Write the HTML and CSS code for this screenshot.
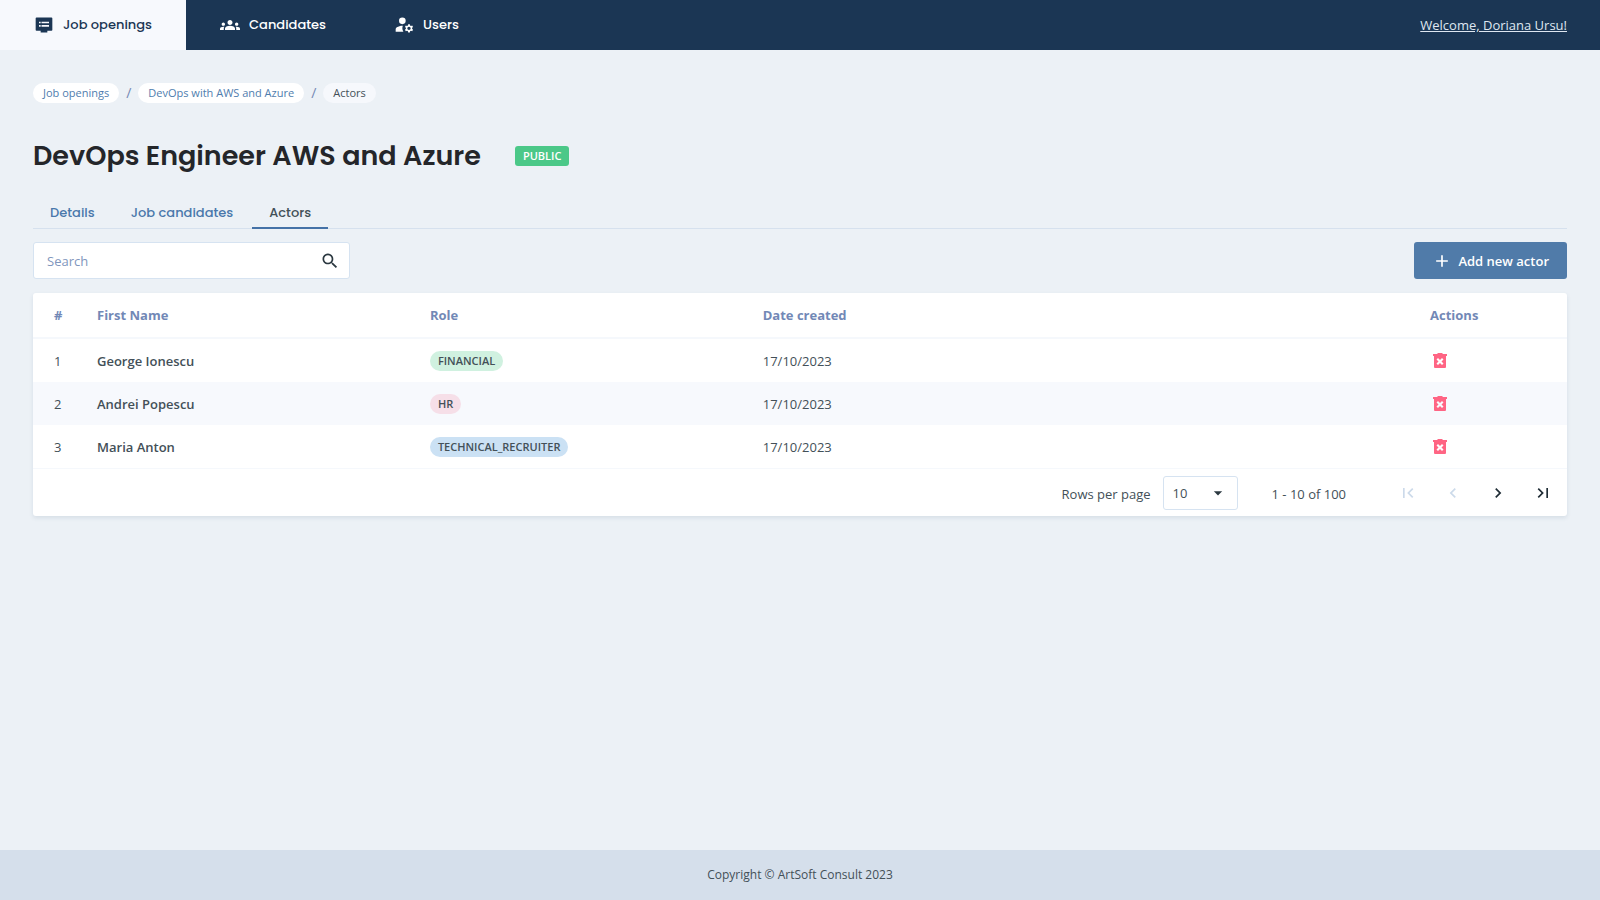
FILE: index.html
```html
<!DOCTYPE html>
<html lang="en">
  <head>
    <meta charset="UTF-8" />
    <meta name="viewport" content="width=device-width, initial-scale=1" />
    <title>Actors - DevOps Engineer AWS and Azure</title>
    <link rel="stylesheet" href="styles.css">
  </head>
  <body>
    <header class="topbar">
      <nav class="main-nav">
        <a class="active" href="#">
          <svg viewBox="0 0 24 24"><path d="M21 3H3c-.6 0-1 .4-1 1v14c0 .6.4 1 1 1h5v2h8v-2h5c.6 0 1-.4 1-1V4c0-.6-.4-1-1-1zM8 14H6v-2h2v2zm0-4H6V8h2v2zm10 4H9v-2h9v2zm0-4H9V8h9v2z" /></svg>
          Job openings
        </a>
        <a href="#">
          <svg viewBox="0 0 24 24"><path d="M12 12.750c1.630 0 3.070.39 4.240.9 1.080.48 1.760 1.560 1.760 2.730V18H6v-1.610c0-1.180.68-2.260 1.760-2.730 1.170-.52 2.610-.91 4.240-.91zM4 13c1.100 0 2-.9 2-2s-.9-2-2-2-2 .9-2 2 .9 2 2 2zm1.130 1.100C4.760 14.040 4.390 14 4 14c-.99 0-1.930.21-2.780.58C.48 14.900 0 15.620 0 16.430V18h4.500v-1.610c0-.83.23-1.610.63-2.290zM20 13c1.100 0 2-.9 2-2s-.9-2-2-2-2 .9-2 2 .9 2 2 2zm4 3.430c0-.81-.48-1.530-1.220-1.850C21.930 14.210 20.990 14 20 14c-.39 0-.76.04-1.130.1.400.68.630 1.460.630 2.290V18H24v-1.570zM12 6c1.660 0 3 1.340 3 3s-1.340 3-3 3-3-1.340-3-3 1.340-3 3-3z" /></svg>
          Candidates
        </a>
        <a href="#">
          <svg viewBox="0 0 24 24"><circle cx="10" cy="7" r="4" /><path d="M10.670 13.020C10.450 13.010 10.230 13 10 13c-2.420 0-4.680.67-6.610 1.820C2.510 15.340 2 16.320 2 17.350V20h9.260C10.470 18.870 10 17.490 10 16c0-1.070.25-2.070.67-2.980z" /><path d="M21.750 16c0-.22-.03-.42-.06-.63l1.140-1.010-1-1.730-1.450.49c-.32-.27-.68-.48-1.080-.63L19 11h-2l-.3 1.490c-.4.150-.76.360-1.080.63l-1.450-.49-1 1.730 1.140 1.010c-.03.21-.06.41-.06.63s.03.42.06.63l-1.140 1.010 1 1.730 1.450-.49c.32.270.68.480 1.080.63L17 21h2l.3-1.490c.4-.15.76-.36 1.080-.63l1.450.49 1-1.730-1.140-1.010c.03-.21.06-.41.06-.63zM18 18c-1.100 0-2-.9-2-2s.9-2 2-2 2 .9 2 2-.9 2-2 2z" /></svg>
          Users
        </a>
      </nav>
      <a class="welcome" href="#">Welcome, Doriana Ursu!</a>
    </header>

    <main>
      <nav class="breadcrumb" aria-label="Breadcrumb">
        <a href="#">Job openings</a>
        <span class="separator">/</span>
        <a href="#">DevOps with AWS and Azure</a>
        <span class="separator">/</span>
        <span class="current">Actors</span>
      </nav>

      <div class="title">
        <h1>DevOps Engineer AWS and Azure</h1>
        <span class="status">PUBLIC</span>
      </div>

      <nav class="tabs">
        <a href="#">Details</a>
        <a href="#">Job candidates</a>
        <a class="active" href="#">Actors</a>
      </nav>

      <div class="toolbar">
        <form class="search">
          <input type="text" placeholder="Search" aria-label="Search" />
          <button type="submit" aria-label="Submit search">
            <svg viewBox="0 0 24 24"><path d="M15.500 14h-.79l-.28-.27C15.410 12.590 16 11.110 16 9.500 16 5.910 13.090 3 9.500 3S3 5.910 3 9.500 5.910 16 9.500 16c1.610 0 3.090-.59 4.230-1.570l.27.28v.79l5 4.990L20.490 19l-4.990-5zm-6 0C7.010 14 5 11.990 5 9.500S7.010 5 9.500 5 14 7.010 14 9.500 11.990 14 9.500 14z" /></svg>
          </button>
        </form>
        <button type="button" class="btn-add">
          <svg viewBox="0 0 24 24"><path d="M19 13h-6v6h-2v-6H5v-2h6V5h2v6h6v2z" /></svg>
          Add new actor
        </button>
      </div>

      <div class="card">
        <table>
          <colgroup>
            <col class="col-index" />
            <col class="col-name" />
            <col class="col-role" />
            <col class="col-date" />
            <col />
          </colgroup>
          <thead>
            <tr>
              <th>#</th>
              <th>First Name</th>
              <th>Role</th>
              <th>Date created</th>
              <th>Actions</th>
            </tr>
          </thead>
          <tbody>
            <tr>
              <td>1</td>
              <td class="name">George Ionescu</td>
              <td><span class="role financial">FINANCIAL</span></td>
              <td>17/10/2023</td>
              <td>
                <button type="button" class="btn-delete" aria-label="Delete George Ionescu">
                  <svg viewBox="0 0 20 20"><path fill-rule="evenodd" d="M3 3h4l1-1h4l1 1h4v2h-1v11q0 1-1 1H5q-1 0-1-1V5H3zM8 7L6.500 8.500 8.500 10.500l-2 2L8 14l2-2 2 2 1.500-1.500-2-2 2-2L12 7l-2 2z" /></svg>
                </button>
              </td>
            </tr>
            <tr>
              <td>2</td>
              <td class="name">Andrei Popescu</td>
              <td><span class="role hr">HR</span></td>
              <td>17/10/2023</td>
              <td>
                <button type="button" class="btn-delete" aria-label="Delete Andrei Popescu">
                  <svg viewBox="0 0 20 20"><path fill-rule="evenodd" d="M3 3h4l1-1h4l1 1h4v2h-1v11q0 1-1 1H5q-1 0-1-1V5H3zM8 7L6.500 8.500 8.500 10.500l-2 2L8 14l2-2 2 2 1.500-1.500-2-2 2-2L12 7l-2 2z" /></svg>
                </button>
              </td>
            </tr>
            <tr>
              <td>3</td>
              <td class="name">Maria Anton</td>
              <td><span class="role recruiter">TECHNICAL_RECRUITER</span></td>
              <td>17/10/2023</td>
              <td>
                <button type="button" class="btn-delete" aria-label="Delete Maria Anton">
                  <svg viewBox="0 0 20 20"><path fill-rule="evenodd" d="M3 3h4l1-1h4l1 1h4v2h-1v11q0 1-1 1H5q-1 0-1-1V5H3zM8 7L6.500 8.500 8.500 10.500l-2 2L8 14l2-2 2 2 1.500-1.500-2-2 2-2L12 7l-2 2z" /></svg>
                </button>
              </td>
            </tr>
          </tbody>
        </table>

        <!-- Pagination -->
        <div class="pagination">
          <label for="rows">Rows per page</label>
          <div class="select">
            <select id="rows">
              <option>10</option>
              <option>25</option>
              <option>50</option>
            </select>
            <svg viewBox="0 0 24 24"><path d="M7 10l5 5 5-5z" /></svg>
          </div>
          <span class="range">1 - 10 of 100</span>
          <div class="pager">
            <button type="button" aria-label="First page" disabled>
              <svg viewBox="0 0 24 24"><path d="M18.410 16.590L13.820 12l4.590-4.590L17 6l-6 6 6 6zM6 6h2v12H6z" /></svg>
            </button>
            <button type="button" aria-label="Previous page" disabled>
              <svg viewBox="0 0 24 24"><path d="M15.410 7.410L14 6l-6 6 6 6 1.410-1.410L10.830 12z" /></svg>
            </button>
            <button type="button" aria-label="Next page">
              <svg viewBox="0 0 24 24"><path d="M10 6L8.590 7.410 13.170 12l-4.580 4.590L10 18l6-6z" /></svg>
            </button>
            <button type="button" aria-label="Last page">
              <svg viewBox="0 0 24 24"><path d="M5.590 7.410L10.180 12l-4.590 4.590L7 18l6-6-6-6zM16 6h2v12h-2z" /></svg>
            </button>
          </div>
        </div>
      </div>
    </main>

    <footer>Copyright © ArtSoft Consult 2023</footer>
  </body>
</html>
```
FILE: styles.css
```css
* {
  box-sizing: border-box;
}

body {
  display: flex;
  flex-direction: column;
  min-height: 100vh;
  margin: 0;
  font-family: "Open Sans", sans-serif;
  font-size: 13px;
  line-height: 20px;
  color: #435058;
  background-color: #ecf1f6;
}

a {
  text-decoration: none;
}

button,
input,
select {
  font: inherit;
}

button {
  border: none;
  padding: 0;
  background: none;
  cursor: pointer;
}

svg {
  display: block;
  width: 20px;
  height: 20px;
  fill: currentColor;
}

/* Header */
.topbar {
  display: flex;
  justify-content: space-between;
  align-items: center;
  height: 50px;
  padding-right: 33px;
  background-color: #1b3654;
}

.main-nav {
  display: flex;
  height: 100%;
}

.main-nav a {
  display: flex;
  align-items: center;
  gap: 9px;
  padding: 0 34px;
  font-family: Poppins, Inter, sans-serif;
  font-weight: 500;
  color: #fff;
}

.main-nav a.active {
  color: #1b3654;
  background-color: #f7f9fd;
}

.welcome {
  color: #dfe7f1;
  text-decoration: underline;
}

main {
  flex: 1;
  padding: 33px 33px 40px;
}

/* Breadcrumb */
.breadcrumb {
  display: flex;
  align-items: center;
  gap: 7px;
  font-size: 11px;
}

.breadcrumb a,
.breadcrumb .current {
  padding: 0 10px;
  border-radius: 10px;
}

.breadcrumb a {
  color: #4f7dae;
  background-color: #fff;
}

.breadcrumb .current {
  background-color: #f6f8fc;
}

.separator {
  font-size: 14px;
  color: #7489b5;
}

/* Title */
.title {
  display: flex;
  align-items: center;
  gap: 34px;
  margin-top: 33px;
}

h1 {
  margin: 0;
  font-family: Poppins, Inter, sans-serif;
  font-size: 27px;
  font-weight: 600;
  line-height: 40px;
  color: #24262a;
}

.status {
  padding: 0 8px;
  border-radius: 3px;
  font-size: 11px;
  font-weight: 600;
  color: #fff;
  background-color: #4bc888;
}

/* Tabs */
.tabs {
  display: flex;
  gap: 2px;
  margin-top: 21px;
  border-bottom: 1px solid #d6e1ee;
}

.tabs a {
  margin-bottom: -1px;
  padding: 6px 17px 4px;
  border-bottom: 2px solid transparent;
  font-family: Poppins, Inter, sans-serif;
  font-weight: 500;
  color: #4a78ab;
}

.tabs a.active {
  border-bottom-color: #4572a7;
  color: #435058;
}

/* Toolbar */
.toolbar {
  display: flex;
  justify-content: space-between;
  margin: 13px 0 14px;
}

.search {
  display: flex;
  align-items: center;
  width: 317px;
  height: 37px;
  padding: 0 9px 0 13px;
  border: 1px solid #d6e3f1;
  border-radius: 3px;
  background-color: #fff;
}

.search input {
  flex: 1;
  min-width: 0;
  padding: 0;
  border: none;
  outline: none;
  color: #435058;
  background: none;
}

.search input::placeholder {
  color: #8196bd;
}

.search button {
  color: #2b3840;
}

.btn-add {
  display: flex;
  align-items: center;
  gap: 6px;
  height: 37px;
  padding: 0 18px;
  border-radius: 3px;
  font-weight: 600;
  color: #fff;
  background-color: #507ba9;
}

/* Table */
.card {
  border-radius: 3px;
  background-color: #fff;
  box-shadow: 0 2px 4px rgba(60, 90, 120, 0.12);
}

table {
  width: 100%;
  table-layout: fixed;
  border-collapse: separate;
  border-spacing: 0;
}

.col-index {
  width: 48px;
}

.col-name,
.col-role {
  width: 21.7%;
}

.col-date {
  width: 43.5%;
}

th,
td {
  height: 43px;
  padding: 0 16px;
  text-align: left;
}

th:first-child,
td:first-child {
  padding: 0 0 0 21px;
}

th {
  height: 46px;
  border-bottom: 2px solid #f5f8fc;
  font-weight: 700;
  color: #7288b6;
}

tbody tr:nth-child(even) {
  background-color: #f7f9fd;
}

.name {
  font-weight: 600;
}

.role {
  display: inline-block;
  padding: 0 8px;
  border-radius: 10px;
  font-size: 11px;
  font-weight: 600;
}

.financial {
  background-color: #d0f1e0;
}

.hr {
  background-color: #f6dfe8;
}

.recruiter {
  background-color: #cbe1f4;
}

.btn-delete {
  display: block;
  color: #ff6584;
}

/* Pagination */
.pagination {
  display: flex;
  align-items: center;
  justify-content: flex-end;
  height: 48px;
  padding-right: 14px;
  border-top: 1px solid #f5f8fc;
}

.pagination label,
.range {
  padding-top: 2px;
}

.select {
  position: relative;
  margin: 0 34px 0 12px;
}

.select select {
  display: block;
  width: 75px;
  height: 34px;
  padding: 0 9px;
  border: 1px solid #d6e3f1;
  border-radius: 3px;
  appearance: none;
  color: #435058;
  background-color: #fff;
}

.select svg {
  position: absolute;
  top: 7px;
  right: 10px;
  color: #2b3840;
  pointer-events: none;
}

.pager {
  display: flex;
  gap: 25px;
  margin-left: 52px;
}

.pager button {
  color: #1f2c35;
}

.pager button:disabled {
  color: #ccdaea;
}

footer {
  padding: 15px;
  font-size: 12px;
  text-align: center;
  background-color: #d5dfeb;
}
```
